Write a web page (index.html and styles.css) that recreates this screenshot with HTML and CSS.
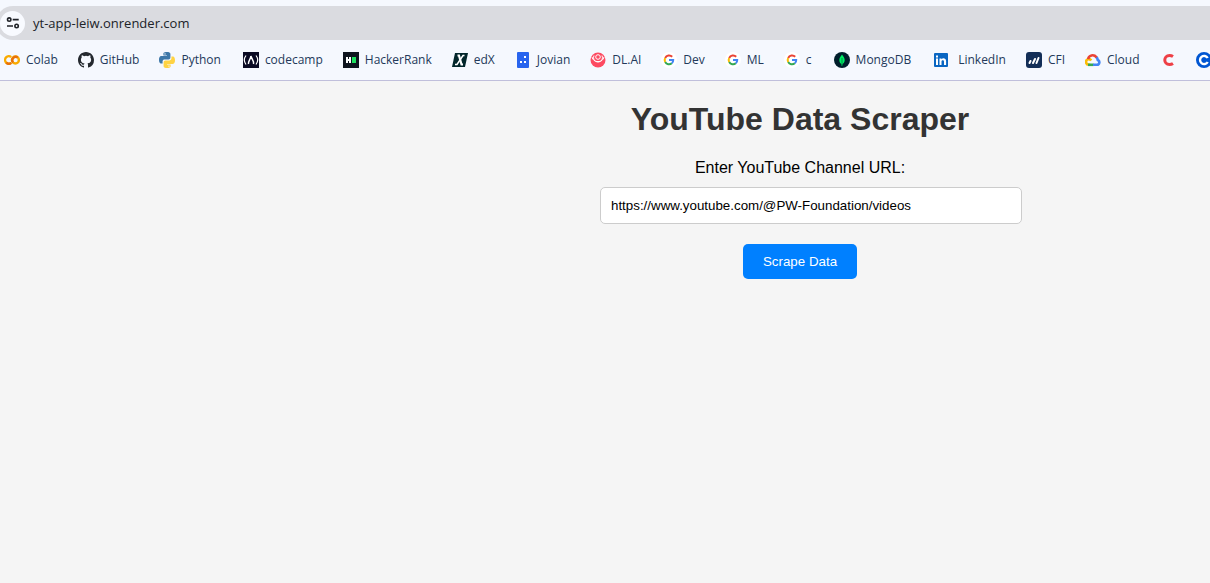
FILE: index.html
```html
<!DOCTYPE html>
<html lang="en">
<head>
<meta charset="utf-8">
<title>YouTube Data Scraper</title>
<link rel="stylesheet" href="styles.css">
</head>
<body>
<header class="browser">
  <div class="address-bar">
    <button class="site-info" type="button" aria-label="View site information">
      <svg width="14" height="14" viewBox="0 0 14 14" fill="none" stroke="#202328" stroke-width="1.6"><circle cx="3.2" cy="3.6" r="1.7"/><path d="M6.7 3.6h6M1 10h6"/><circle cx="10.6" cy="10" r="1.7"/></svg>
    </button>
    <span class="address">yt-app-leiw.onrender.com</span>
  </div>
  <nav class="bookmarks" aria-label="Bookmarks">
    <a class="bookmark" href="#"><svg class="icon" viewBox="0 0 16 16" fill="none" stroke-width="2.4"><path d="M7.2 5.2A3.7 3.7 0 1 0 7.2 10.8" stroke="#f9ab00"/><path d="M2.3 10.7A3.7 3.7 0 0 0 7.2 10.8" stroke="#e8710a"/><circle cx="11.4" cy="8" r="3.5" stroke="#f9ab00"/><path d="M9 10.5A3.5 3.5 0 0 1 13.8 5.5" stroke="#e8710a"/></svg>Colab</a>
    <a class="bookmark" href="#"><svg class="icon" viewBox="0 0 16 16"><path fill="#24292f" d="M8 0C3.58 0 0 3.58 0 8c0 3.54 2.29 6.53 5.47 7.59.4.07.55-.17.55-.38 0-.19-.01-.82-.01-1.49-2.01.37-2.53-.49-2.69-.94-.09-.23-.48-.94-.82-1.13-.28-.15-.68-.52-.01-.53.63-.01 1.08.58 1.23.82.72 1.21 1.87.87 2.33.66.07-.52.28-.87.51-1.07-1.78-.2-3.64-.89-3.64-3.95 0-.87.31-1.59.82-2.15-.08-.2-.36-1.02.08-2.12 0 0 .67-.21 2.2.82a7.6 7.6 0 0 1 4 0c1.53-1.04 2.2-.82 2.2-.82.44 1.1.16 1.92.08 2.12.51.56.82 1.27.82 2.15 0 3.07-1.87 3.75-3.65 3.95.29.25.54.73.54 1.48 0 1.07-.01 1.93-.01 2.2 0 .21.15.46.55.38A8 8 0 0 0 16 8c0-4.42-3.58-8-8-8z"/></svg>GitHub</a>
    <a class="bookmark wide" href="#"><svg class="icon" viewBox="0 0 16 16"><path fill="#3d77a8" d="M7.9 0C4.3 0 4.4 1.6 4.4 1.6v1.9H8v.6H2.5S0 3.8 0 7.8s2.200 3.800 2.200 3.800h1.400V9.700S3.500 7.500 5.700 7.500h3.600s2.100 0 2.100-2V2.100S11.700 0 7.900 0z"/><circle cx="6" cy="1.900" r=".7" fill="#fff"/><path fill="#ffd343" d="M8.100 16c3.600 0 3.500-1.600 3.500-1.600v-1.900H8v-.6h5.500s2.500.3 2.500-3.700-2.200-3.800-2.200-3.800h-1.400v1.900s.1 2.200-2.100 2.200H6.700s-2.100 0-2.100 2v3.400S4.300 16 8.100 16z"/><circle cx="10" cy="14.100" r=".7" fill="#fff"/></svg>Python</a>
    <a class="bookmark" href="#"><svg class="icon" viewBox="0 0 16 16"><path fill="#0a0a23" d="M0 0h16v16H0z"/><g fill="none" stroke="#fff" stroke-width="1.200"><path d="M3 3.500Q-.4 8 3 12.500M13 3.500Q16.400 8 13 12.500"/></g><path fill="none" stroke="#fff" stroke-width="1.500" d="M5.500 12C4.800 9.500 7.600 7.500 7.900 4c.6 3 3.700 5.500 2.600 8"/></svg>codecamp</a>
    <a class="bookmark" href="#"><svg class="icon" viewBox="0 0 16 16"><path fill="#0e141e" d="M0 0h16v16H0z"/><path fill="#fff" d="M3 5h2v2h1V5h2v6H6V9H5v2H3z"/><path fill="#1ee05f" d="M9 5h4v6H9z"/></svg>HackerRank</a>
    <a class="bookmark" href="#"><svg class="icon" viewBox="0 0 16 16"><path fill="#02262b" d="M3 1h13l-3 14H0z"/><g fill="none" stroke="#fff"><path stroke-width="2.200" d="M5.500 3.500h1.500l2.500 9H11"/><path stroke-width="1.500" d="M12.500 3.500h-1.500L5 12.500H3"/></g></svg>edX</a>
    <a class="bookmark" href="#"><svg class="icon" viewBox="0 0 16 16"><rect x="2" width="12" height="16" rx="1" fill="#2864ee"/><g fill="#fff"><path d="M9 4h2v2H9zM5 9h2v2H5zM9 9h2v2H9z"/></g></svg>Jovian</a>
    <a class="bookmark" href="#"><svg class="icon" viewBox="0 0 16 16"><circle cx="8" cy="8" r="7.500" fill="#fd4a61"/><g fill="none" stroke="#fff"><path d="M2 5A6.200 6.200 0 0 0 14 5"/><path d="M4 3.500A4.500 4.500 0 1 0 12 3.500"/><circle cx="8" cy="5" r="2.300"/></g></svg>DL.AI</a>
    <a class="bookmark" href="#"><svg class="icon" viewBox="0 0 16 16"><use href="#google"/></svg>Dev</a>
    <a class="bookmark" href="#"><svg class="icon" viewBox="0 0 16 16"><use href="#google"/></svg>ML</a>
    <a class="bookmark wide" href="#"><svg class="icon" viewBox="0 0 16 16"><g id="google"><circle cx="8" cy="8" r="8" fill="#fff"/><g fill="none" stroke-width="2"><path stroke="#ea4335" d="M11.200 4.800A4.300 4.300 0 0 0 4.200 6"/><path stroke="#fbbc05" d="M4.200 6a4.300 4.300 0 0 0 0 4"/><path stroke="#34a853" d="M4.200 10a4.300 4.300 0 0 0 6.600 1.300"/><path stroke="#4285f4" d="M10.800 11.300A4.300 4.300 0 0 0 12.200 8H8"/></g></g></svg>c</a>
    <a class="bookmark wide" href="#"><svg class="icon" viewBox="0 0 16 16"><circle cx="8" cy="8" r="8" fill="#001e2b"/><path fill="#00ed64" d="M8 2.500c.6 1.200 2.700 2.700 2.700 5.600 0 2.300-1.300 3.500-2.300 4.300L8.200 14h-.5l-.2-1.600c-1-.8-2.200-2-2.200-4.300 0-2.900 2.100-4.400 2.700-5.600z"/><path stroke="#006b3d" stroke-width=".7" d="M8 6v7"/></svg>MongoDB</a>
    <a class="bookmark spaced" href="#"><svg class="icon" viewBox="0 0 16 16"><rect x="1" y="1" width="14" height="14" rx="1" fill="#0a66c2"/><path fill="#fff" d="M3 6.500h2V13H3zM3 3.500h2v2H3zM6.500 6.500h2v.8c1.200-1.600 4.600-1.300 4.600 1.900V13H11V9.800c0-2-2.500-1.900-2.500 0V13h-2z"/></svg>LinkedIn</a>
    <a class="bookmark" href="#"><svg class="icon" viewBox="0 0 16 16"><rect width="16" height="16" rx="3" fill="#132e57"/><g stroke="#fff" stroke-width="2" stroke-linecap="round"><path d="M3.500 11l1-2M7 11l2-4M10.500 11l2-5"/></g></svg>CFI</a>
    <a class="bookmark" href="#"><svg class="icon" viewBox="0 0 16 16" fill="none" stroke-width="2.600"><path stroke="#fbbc05" d="M5.300 12.800H4A2.800 2.800 0 1 1 6.200 8.500"/><path stroke="#34a853" d="M3 12.800h5.500"/><path stroke="#4285f4" d="M8 12.800h4a2.500 2.500 0 0 0 .8-4.800Q12.500 6 11.200 5"/><path stroke="#ea4335" d="M3.200 7.200C3.500 3 8.800 2 11.600 5.300"/></svg>Cloud</a>
    <a class="bookmark" href="#" aria-label="Coursework"><svg class="icon" viewBox="0 0 16 16"><path fill="none" stroke="#ee3f46" stroke-width="3" d="M13 4.500Q11.500 3.500 9.500 3.500C3.200 3.500 3.200 12.500 9.500 12.500Q11.500 12.500 13 11.500"/></svg></a>
    <a class="bookmark" href="#" aria-label="Coursera"><svg class="icon" viewBox="0 0 16 16"><circle cx="8" cy="8" r="8" fill="#0056d2"/><path fill="none" stroke="#fff" stroke-width="2.400" d="M11.700 6A4.100 4.100 0 1 0 11.700 10"/></svg></a>
  </nav>
</header>
<main class="page">
  <h1 class="title">YouTube Data Scraper</h1>
  <form class="form">
    <label class="label" for="channel-url">Enter YouTube Channel URL:</label>
    <input class="url-input" id="channel-url" type="text" value="https://www.youtube.com/@PW-Foundation/videos">
    <button class="submit" type="button">Scrape Data</button>
  </form>
</main>
</body>
</html>
```
FILE: styles.css
```css
body {
  margin: 0;
  min-height: 100vh;
  overflow-x: hidden;
  background: #f5f5f5;
  font-family: "Liberation Sans", Arial, sans-serif;
}

.browser {
  padding-top: 6px;
  overflow: hidden;
  background: #f5f8fe;
  border-bottom: 1px solid #c0bfdb;
  font-family: "Open Sans", "Noto Sans", sans-serif;
}

.address-bar {
  display: flex;
  align-items: center;
  gap: 8px;
  height: 34px;
  margin-left: -4px;
  padding-left: 4px;
  border-radius: 17px 0 0 17px;
  background: #dadbe0;
}

.site-info {
  display: flex;
  align-items: center;
  justify-content: center;
  width: 25px;
  height: 25px;
  padding: 0;
  border: 0;
  border-radius: 50%;
  background: #f8faff;
}

.address {
  font-size: 13px;
  color: #202328;
}

.bookmarks {
  display: flex;
  align-items: center;
  gap: 20px;
  height: 40px;
  padding-left: 4px;
}

.bookmark {
  display: flex;
  flex: none;
  align-items: center;
  gap: 6px;
  color: #23395a;
  font-size: 12px;
  line-height: 16px;
  text-decoration: none;
  white-space: nowrap;
}

.wide {
  margin-right: 2px;
}

.spaced {
  gap: 9px;
}

.icon {
  width: 16px;
  height: 16px;
}

.page {
  width: 400px;
  margin-left: calc(50% - 5px);
  padding-top: 20px;
  text-align: center;
}

.title {
  margin: 0 0 21px;
  color: #333;
  font-size: 32px;
  line-height: 37px;
}

.form {
  display: flex;
  flex-direction: column;
  align-items: center;
}

.label {
  margin-bottom: 10px;
  font-size: 16px;
  line-height: 18px;
}

.url-input {
  align-self: flex-start;
  box-sizing: content-box;
  width: 100%;
  margin: 0 0 20px;
  padding: 10px;
  border: 1px solid #ccc;
  border-radius: 5px;
  background: #fff;
  color: #000;
  font-family: inherit;
}

.submit {
  padding: 10px 20px;
  border: 0;
  border-radius: 5px;
  background: #0080ff;
  color: #fff;
  font-family: inherit;
}
```
